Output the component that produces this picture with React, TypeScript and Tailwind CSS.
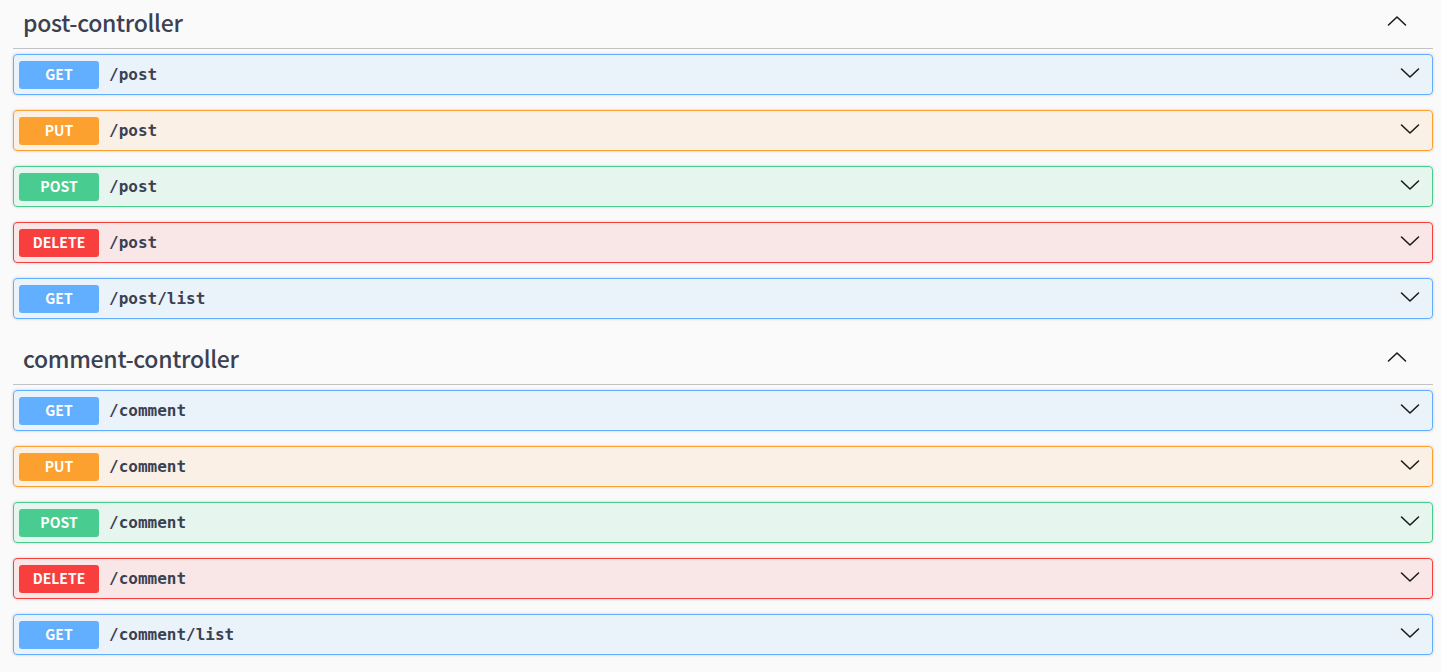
import React from 'react';

type Method = 'GET' | 'PUT' | 'POST' | 'DELETE';

const styles: Record<Method, { row: string; badge: string }> = {
  GET: { row: 'border-[#61affe] bg-[#61affe]/10', badge: 'bg-[#61affe]' },
  PUT: { row: 'border-[#fca130] bg-[#fca130]/10', badge: 'bg-[#fca130]' },
  POST: { row: 'border-[#49cc90] bg-[#49cc90]/10', badge: 'bg-[#49cc90]' },
  DELETE: { row: 'border-[#f93e3e] bg-[#f93e3e]/10', badge: 'bg-[#f93e3e]' },
};

const sans = '"Noto Sans CJK KR", "Noto Sans", sans-serif';

const Chevron = ({ up }: { up?: boolean }) => (
  <svg width="20" height="12" viewBox="0 0 20 12" fill="none" stroke="#1b1b1b" strokeWidth="1.6" strokeLinecap="round" strokeLinejoin="round">
    <polyline points={up ? '1.5,10 10,2 18.5,10' : '1.5,2 10,10 18.5,2'} />
  </svg>
);

const Endpoint = ({ method, path }: { method: Method; path: string }) => (
  <div
    className={`flex items-center h-[41px] mb-[15px] border rounded-[4px] px-[5px] shadow-[0_0_3px_rgba(0,0,0,0.19)] ${styles[method].row}`}
  >
    <span
      className={`w-[80px] h-[28px] flex items-center justify-center rounded-[3px] text-white text-[14px] font-bold ${styles[method].badge}`}
      style={{ fontFamily: sans }}
    >
      {method}
    </span>
    <span
      className="flex-1 px-[10px] text-[16px] font-bold text-[#3b4151]"
      style={{ fontFamily: '"DejaVu Sans Mono", monospace' }}
    >
      {path}
    </span>
    <span className="pr-[7px] pb-[4px] flex items-center">
      <Chevron />
    </span>
  </div>
);

const Section = ({ name, endpoints }: { name: string; endpoints: [Method, string][] }) => (
  <div className="pb-[2px]">
    <div className="flex items-center h-[49px] pl-[10px] pr-[26px] mb-[5px] border-b border-[#3b4151]/30">
      <h3
        className="flex-1 text-[23px] font-medium tracking-[-0.3px] text-[#3b4151] pb-[4px]"
        style={{ fontFamily: sans }}
      >
        {name}
      </h3>
      <span className="pb-[6px] flex items-center">
        <Chevron up />
      </span>
    </div>
    {endpoints.map(([m, p], i) => (
      <Endpoint key={i} method={m} path={p} />
    ))}
  </div>
);

export default function App() {
  return (
    <div
      className="w-[1441px] h-[672px] overflow-hidden bg-[#fafafa] pl-[13px] pr-[8px]"
      style={{ fontFamily: sans }}
    >
      <Section
        name="post-controller"
        endpoints={[
          ['GET', '/post'],
          ['PUT', '/post'],
          ['POST', '/post'],
          ['DELETE', '/post'],
          ['GET', '/post/list'],
        ]}
      />
      <Section
        name="comment-controller"
        endpoints={[
          ['GET', '/comment'],
          ['PUT', '/comment'],
          ['POST', '/comment'],
          ['DELETE', '/comment'],
          ['GET', '/comment/list'],
        ]}
      />
    </div>
  );
}
